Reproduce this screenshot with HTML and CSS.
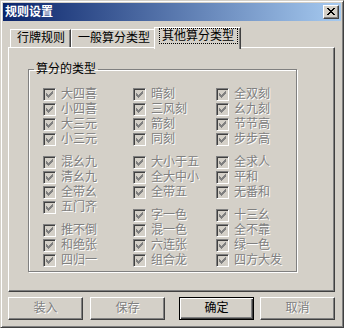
FILE: index.html
```html
<!DOCTYPE html>
<html>
<head>
    <title>规则设置</title>
    <link rel="stylesheet" href="styles.css">
</head>
<body>
    <div class="window">
        <div class="titleBar">
            <span class="title">规则设置</span>
            <span class="closeButton">
                <svg width="8" height="7" viewBox="0 0 8 7" shape-rendering="crispEdges">
                    <path d="M0 0h2v1h-2zM6 0h2v1h-2zM1 1h2v1h-2zM5 1h2v1h-2zM2 2h4v1h-4zM3 3h2v1h-2zM2 4h4v1h-4zM1 5h2v1h-2zM5 5h2v1h-2zM0 6h2v1h-2zM6 6h2v1h-2z" fill="#000"/>
                </svg>
            </span>
        </div>
        <div class="clientArea">
            <div class="tabs">
                <div class="tab">行牌规则</div>
                <div class="tab">一般算分类型</div>
                <div class="tab selected"><span class="focus">其他算分类型</span></div>
            </div>
            <div class="panel">
                <fieldset class="groupBox">
                    <legend>算分的类型</legend>
                    <div class="columns">
                        <div class="column">
                            <div class="group">
                                <div class="check"><span class="box"></span>大四喜</div>
                                <div class="check"><span class="box"></span>小四喜</div>
                                <div class="check"><span class="box"></span>大三元</div>
                                <div class="check"><span class="box"></span>小三元</div>
                            </div>
                            <div class="group">
                                <div class="check"><span class="box"></span>混幺九</div>
                                <div class="check"><span class="box"></span>清幺九</div>
                                <div class="check"><span class="box"></span>全带幺</div>
                                <div class="check"><span class="box"></span>五门齐</div>
                            </div>
                            <div class="group">
                                <div class="check"><span class="box"></span>推不倒</div>
                                <div class="check"><span class="box"></span>和绝张</div>
                                <div class="check"><span class="box"></span>四归一</div>
                            </div>
                        </div>
                        <div class="column">
                            <div class="group">
                                <div class="check"><span class="box"></span>暗刻</div>
                                <div class="check"><span class="box"></span>三风刻</div>
                                <div class="check"><span class="box"></span>箭刻</div>
                                <div class="check"><span class="box"></span>同刻</div>
                            </div>
                            <div class="group">
                                <div class="check"><span class="box"></span>大小于五</div>
                                <div class="check"><span class="box"></span>全大中小</div>
                                <div class="check"><span class="box"></span>全带五</div>
                            </div>
                            <div class="group">
                                <div class="check"><span class="box"></span>字一色</div>
                                <div class="check"><span class="box"></span>混一色</div>
                                <div class="check"><span class="box"></span>六连张</div>
                                <div class="check"><span class="box"></span>组合龙</div>
                            </div>
                        </div>
                        <div class="column">
                            <div class="group">
                                <div class="check"><span class="box"></span>全双刻</div>
                                <div class="check"><span class="box"></span>幺九刻</div>
                                <div class="check"><span class="box"></span>节节高</div>
                                <div class="check"><span class="box"></span>步步高</div>
                            </div>
                            <div class="group">
                                <div class="check"><span class="box"></span>全求人</div>
                                <div class="check"><span class="box"></span>平和</div>
                                <div class="check"><span class="box"></span>无番和</div>
                            </div>
                            <div class="group">
                                <div class="check"><span class="box"></span>十三幺</div>
                                <div class="check"><span class="box"></span>全不靠</div>
                                <div class="check"><span class="box"></span>绿一色</div>
                                <div class="check"><span class="box"></span>四方大发</div>
                            </div>
                        </div>
                    </div>
                </fieldset>
            </div>
            <div class="buttonRow">
                <div class="buttonGroup">
                    <div class="button disabled">装入</div>
                    <div class="button disabled">保存</div>
                </div>
                <div class="buttonGroup">
                    <div class="button default">确定</div>
                    <div class="button disabled">取消</div>
                </div>
            </div>
        </div>
    </div>
</body>
</html>
```

FILE: styles.css
```css
body {
    margin: 0;
    background-color: #d4d0c8;
    font-family: "Liberation Sans", "Noto Sans CJK SC", sans-serif;
    font-size: 12px;
    color: #000;
}

.window {
    width: 344px;
    height: 328px;
    box-sizing: border-box;
    border: 1px solid;
    border-color: #d4d0c8 #404040 #404040 #d4d0c8;
    box-shadow: inset 1px 1px #fff, inset -1px -1px #808080;
    padding: 2px;
    background-color: #d4d0c8;
}

.titleBar {
    height: 18px;
    display: flex;
    align-items: center;
    justify-content: space-between;
    padding: 0 2px 0 2px;
    background: linear-gradient(to right, #0a246a, #a6caf0);
}

.title {
    color: #fff;
    font-weight: bold;
    line-height: 18px;
}

.closeButton {
    width: 16px;
    height: 14px;
    box-sizing: border-box;
    border: 1px solid;
    border-color: #fff #404040 #404040 #fff;
    box-shadow: inset -1px -1px #808080;
    background-color: #d4d0c8;
    display: flex;
    justify-content: center;
    padding-top: 2px;
    padding-right: 1px;
}

.closeButton svg {
    display: block;
}

.clientArea {
    padding: 6px 6px 0px 5px;
}

.tabs {
    display: flex;
    align-items: flex-end;
    height: 20px;
    padding-left: 2px;
}

.tab {
    height: 18px;
    box-sizing: border-box;
    border: 1px solid;
    border-color: #fff #404040 transparent #fff;
    border-bottom: none;
    box-shadow: inset -1px 0 #808080;
    padding: 0 5px 0 6px;
    line-height: 16px;
    background-color: #d4d0c8;
}

.tab.selected {
    position: relative;
    z-index: 1;
    height: 22px;
    margin: 0 -2px -2px -2px;
    padding: 1px 3px 0 5px;
    line-height: 13px;
}

.focus {
    display: inline-block;
    outline: 1px dotted #000;
    padding: 0 3px 0 2px;
    line-height: 14px;
}

.panel {
    border: 1px solid;
    border-color: #fff #404040 #404040 #fff;
    box-shadow: inset -1px -1px #808080;
    padding: 14px 0 19px 19px;
}

.groupBox {
    width: 269px;
    box-sizing: border-box;
    margin: 0;
    border: 1px solid #808080;
    box-shadow: inset 1px 1px #fff, 1px 1px #fff;
    padding: 0 0 3px 5px;
}

.groupBox legend {
    padding: 0 2px;
    line-height: 14px;
    color: #000;
}

.columns {
    display: grid;
    grid-template-columns: 90px 83px 1fr;
    margin: 11px 0 0 9px;
}

.column {
    display: flex;
    flex-direction: column;
    gap: 8px;
}

.check {
    display: flex;
    align-items: center;
    height: 15px;
    line-height: 15px;
    color: #808080;
    text-shadow: 1px 1px 0 #fff;
    white-space: nowrap;
}

.box {
    position: relative;
    width: 13px;
    height: 13px;
    box-sizing: border-box;
    flex-shrink: 0;
    margin-right: 5px;
    border: 1px solid;
    border-color: #808080 #fff #fff #808080;
    box-shadow: inset 1px 1px #404040, inset -1px -1px #d4d0c8;
    background-color: #d4d0c8;
}

.box::after {
    content: "";
    position: absolute;
    left: 2px;
    top: 4px;
    width: 1px;
    height: 3px;
    background-color: #808080;
    box-shadow: 1px 1px #808080, 2px 2px #808080, 3px 1px #808080, 4px 0 #808080, 5px -1px #808080, 6px -2px #808080;
}

.buttonRow {
    display: flex;
    justify-content: space-between;
    margin-top: 5px;
}

.buttonGroup {
    display: flex;
    gap: 7px;
}

.buttonGroup:last-child {
    gap: 6px;
}

.button {
    width: 75px;
    height: 23px;
    box-sizing: border-box;
    border: 1px solid;
    border-color: #fff #404040 #404040 #fff;
    box-shadow: inset -1px -1px #808080;
    text-align: center;
    line-height: 21px;
}

.button.disabled {
    color: #808080;
    text-shadow: 1px 1px 0 #fff;
}

.button.default {
    border-color: #000;
    box-shadow: inset 1px 1px #fff, inset -1px -1px #404040, inset -2px -2px #808080;
}
```
